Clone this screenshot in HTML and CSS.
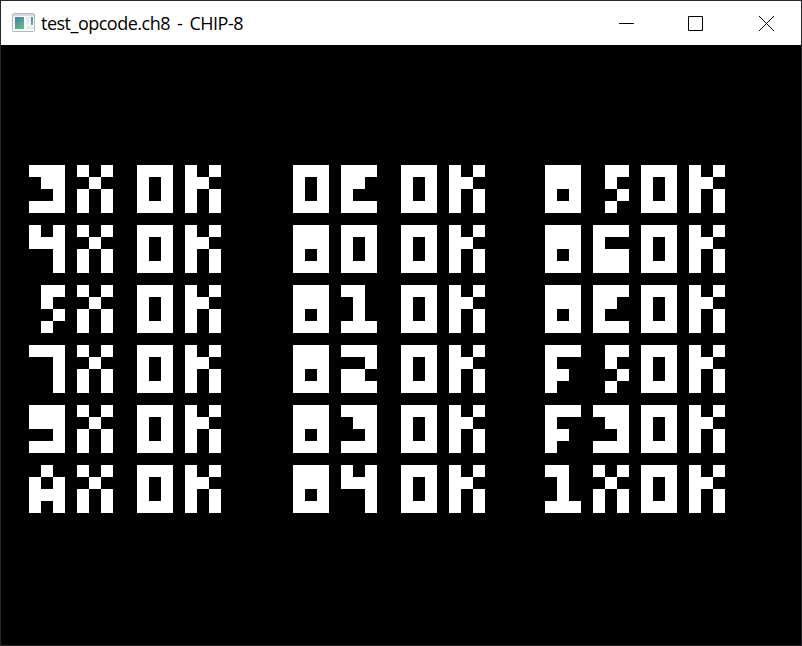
FILE: index.html
```
<!DOCTYPE html>
<html lang="en">
<head>
<meta charset="utf-8">
<title>test_opcode.ch8 - CHIP-8</title>
<link rel="stylesheet" href="styles.css">
</head>
<body>
<div class="window">
  <header class="titlebar">
    <svg class="app-icon" width="23" height="19" viewBox="0 0 23 19">
      <defs>
        <linearGradient id="pane" x1="0" y1="0" x2=".6" y2="1">
          <stop offset="0" stop-color="#437fae"/>
          <stop offset="1" stop-color="#68b587"/>
        </linearGradient>
      </defs>
      <rect x=".5" y=".5" width="22" height="18" rx="1" fill="#f7f8f9" stroke="#b4b8bd"/>
      <rect x="1" y="1" width="21" height="2" fill="#d5d9df"/>
      <rect x="3" y="4" width="9" height="12" fill="url(#pane)"/>
      <rect x="14" y="4" width="4" height="7" fill="#e9ebed"/>
      <rect x="19" y="4" width="2" height="8" fill="url(#pane)"/>
      <rect x="14" y="13" width="7" height="3" fill="#e9ebed"/>
    </svg>
    <h1 class="title">test_opcode.ch8 - CHIP-8</h1>
    <div class="controls">
      <button class="control control--min" aria-label="Minimize"><svg width="15" height="15" viewBox="0 0 15 15"><path d="M0 7.5H15"/></svg></button>
      <button class="control control--max" aria-label="Maximize"><svg width="15" height="15" viewBox="0 0 15 15"><path d="M.5 .5H14.5V14.5H.5Z"/></svg></button>
      <button class="control" aria-label="Close"><svg width="15" height="15" viewBox="0 0 15 15"><path d="M0 0L15 15M15 0L0 15"/></svg></button>
    </div>
  </header>
  <main class="display" id="display"></main>
</div>
<script src="display.js"></script>
</body>
</html>
```
FILE: styles.css
```
* { box-sizing: border-box; }
body { margin: 0; background: #000; }
.window {
  width: 802px;
  height: 646px;
  border: 1px solid #29272b;
  display: flex;
  flex-direction: column;
  background: #000;
}
.titlebar {
  height: 44px;
  flex: none;
  display: flex;
  align-items: center;
  padding-left: 11px;
  background: #fff;
  color: #000;
}
.app-icon { flex: none; margin-right: 6px; margin-top: -2px; }
.title {
  margin: 0;
  font: 400 18px/24px "Open Sans", "Noto Sans", sans-serif;
  letter-spacing: -0.5px;
  word-spacing: 2.9px;
  white-space: nowrap;
}
.controls { display: flex; margin-left: auto; }
.control {
  width: 70px;
  height: 44px;
  padding: 0;
  border: 0;
  background: none;
  display: flex;
  align-items: center;
  justify-content: center;
}
.control--max { padding-right: 2px; }
.control svg { flex: none; fill: none; stroke: #000; stroke-width: 1; }
.display {
  flex: 1;
  display: flex;
  align-items: flex-start;
  gap: 72px;
  padding: 120px 0 0 28px;
}
.column { display: flex; flex-direction: column; gap: 12px; }
.result { display: flex; gap: 24px; }
.result--tight { gap: 12px; }
.column:last-child { margin-left: -12px; }
.pair { display: flex; gap: 12px; }
.sprite { display: grid; grid-template: repeat(4, 12px) / repeat(3, 12px); }
.on { background: #fff; }
```
FILE: display.js
```
// Sprite bitmaps, four rows of three pixels each.
const SPRITES = {
  0: "111 101 101 111",
  1: "110 010 010 111",
  2: "111 001 110 111",
  3: "111 011 001 111",
  4: "101 111 001 001",
  5: "011 010 001 010",
  6: "111 100 111 111",
  7: "111 001 001 001",
  8: "111 111 101 111",
  9: "111 111 001 111",
  A: "010 101 111 101",
  E: "111 110 100 111",
  F: "111 100 110 100",
  K: "101 110 101 101",
  X: "101 010 101 101"
};

const COLUMNS = [
  { tests: ["3X", "4X", "5X", "7X", "9X", "AX"] },
  { tests: ["0E", "80", "81", "82", "83", "84"] },
  { tests: ["85", "86", "8E", "F5", "F3", "1X"], tight: true }
];

function box(className, children) {
  const el = document.createElement("div");
  el.className = className;
  el.append(...children);
  return el;
}

function sprite(ch) {
  const bits = SPRITES[ch].replace(/ /g, "");
  return box("sprite", [...bits].map(b => box(b === "1" ? "on" : "off", [])));
}

const pair = text => box("pair", [...text].map(sprite));

document.getElementById("display").append(...COLUMNS.map(({ tests, tight }) =>
  box("column", tests.map(t =>
    box(tight ? "result result--tight" : "result", [pair(t), pair("0K")])))));
```
